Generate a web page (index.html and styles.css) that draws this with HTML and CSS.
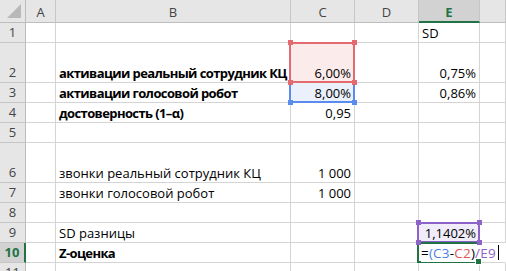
FILE: index.html
```html
<!DOCTYPE html>
<html lang="ru">
<head>
  <meta charset="UTF-8">
  <meta name="viewport" content="width=device-width, initial-scale=1.0">
  <title>Z-оценка</title>
  <link rel="stylesheet" href="styles.css">
</head>
<body>
  <div class="sheet">
    <!-- column headers -->
    <div class="row head-row">
      <div class="corner">
        <svg width="14" height="14" viewBox="0 0 14 14"><polygon points="0,14 14,14 14,0" fill="#b8b8b8"/></svg>
      </div>
      <div class="col-head">A</div>
      <div class="col-head">B</div>
      <div class="col-head">C</div>
      <div class="col-head">D</div>
      <div class="col-head active">E</div>
      <div class="col-head"></div>
    </div>

    <div class="row">
      <div class="row-head">1</div>
      <div class="cell"></div>
      <div class="cell"></div>
      <div class="cell"></div>
      <div class="cell"></div>
      <div class="cell">SD</div>
      <div class="cell"></div>
    </div>

    <div class="row tall">
      <div class="row-head">2</div>
      <div class="cell"></div>
      <div class="cell b">активации реальный сотрудник КЦ</div>
      <div class="cell num sel-red">
        6,00%
        <span class="handle tl"></span><span class="handle tr"></span>
        <span class="handle bl"></span><span class="handle br"></span>
      </div>
      <div class="cell"></div>
      <div class="cell num">0,75%</div>
      <div class="cell"></div>
    </div>

    <div class="row">
      <div class="row-head">3</div>
      <div class="cell"></div>
      <div class="cell b">активации голосовой робот</div>
      <div class="cell num sel-blue">
        8,00%
        <span class="handle bl"></span><span class="handle br"></span>
      </div>
      <div class="cell"></div>
      <div class="cell num">0,86%</div>
      <div class="cell"></div>
    </div>

    <div class="row">
      <div class="row-head">4</div>
      <div class="cell"></div>
      <div class="cell b">достоверность (1–α)</div>
      <div class="cell num">0,95</div>
      <div class="cell"></div>
      <div class="cell"></div>
      <div class="cell"></div>
    </div>

    <div class="row">
      <div class="row-head">5</div>
      <div class="cell"></div>
      <div class="cell"></div>
      <div class="cell"></div>
      <div class="cell"></div>
      <div class="cell"></div>
      <div class="cell"></div>
    </div>

    <div class="row tall">
      <div class="row-head">6</div>
      <div class="cell"></div>
      <div class="cell">звонки реальный сотрудник КЦ</div>
      <div class="cell num">1 000</div>
      <div class="cell"></div>
      <div class="cell"></div>
      <div class="cell"></div>
    </div>

    <div class="row">
      <div class="row-head">7</div>
      <div class="cell"></div>
      <div class="cell">звонки голосовой робот</div>
      <div class="cell num">1 000</div>
      <div class="cell"></div>
      <div class="cell"></div>
      <div class="cell"></div>
    </div>

    <div class="row">
      <div class="row-head">8</div>
      <div class="cell"></div>
      <div class="cell"></div>
      <div class="cell"></div>
      <div class="cell"></div>
      <div class="cell"></div>
      <div class="cell"></div>
    </div>

    <div class="row">
      <div class="row-head">9</div>
      <div class="cell"></div>
      <div class="cell">SD разницы</div>
      <div class="cell"></div>
      <div class="cell"></div>
      <div class="cell num sel-purple">
        1,1402%
        <span class="handle tl"></span><span class="handle tr"></span>
        <span class="handle bl"></span><span class="handle br"></span>
      </div>
      <div class="cell"></div>
    </div>

    <div class="row">
      <div class="row-head active">10</div>
      <div class="cell"></div>
      <div class="cell b">Z-оценка</div>
      <div class="cell"></div>
      <div class="cell"></div>
      <div class="cell editing">
        <span class="formula"><span>=</span><span class="ref-blue">(C3</span><span>-</span><span class="ref-red">C2</span><span>)</span><span class="ref-purple">/E9</span><span class="caret"></span></span>
        <span class="fill-handle"></span>
      </div>
      <div class="cell f-col"></div>
    </div>

    <div class="row last">
      <div class="row-head">11</div>
      <div class="cell"></div>
      <div class="cell"></div>
      <div class="cell"></div>
      <div class="cell"></div>
      <div class="cell"></div>
      <div class="cell"></div>
    </div>
  </div>
</body>
</html>
```

FILE: styles.css
```css
/* Sheet grid */
body {
  margin: 0;
  background: #ffffff;
  font-family: 'Open Sans', 'Liberation Sans', sans-serif;
  font-size: 13px;
  color: #000;
  overflow: hidden;
}

.sheet {
  width: 506px;
}

.row {
  display: grid;
  grid-template-columns: 26px 30px 235px 64px 64px 61px 1fr;
  height: 20px;
}

.row.tall {
  height: 40px;
}

.row.head-row {
  height: 23px;
}

.row.last {
  height: 20px;
}

.row > div {
  box-sizing: border-box;
  border-right: 1px solid #d4d4d4;
  border-bottom: 1px solid #d4d4d4;
  display: flex;
  align-items: flex-end;
  padding: 0 3px 0 3px;
  white-space: nowrap;
  position: relative;
}

/* Headers */
.corner,
.col-head,
.row-head {
  background: #e6e6e6;
  color: #444;
}

.row > .corner {
  border-color: #bdbdbd;
  justify-content: flex-end;
  padding: 0 4px 4px 0;
}

.row > .col-head {
  justify-content: center;
  align-items: center;
  padding: 2px 0 0 0;
  border-right-color: #c6c6c6;
  border-bottom-color: #bdbdbd;
}

.row > .row-head {
  justify-content: center;
  padding: 0 0 1px 0;
  border-right-color: #bdbdbd;
  border-bottom-color: #c6c6c6;
}

.row > .col-head.active {
  background: #d2d2d2;
  color: #217346;
  font-weight: bold;
  border-bottom: 2px solid #217346;
}

.row > .row-head.active {
  background: #d2d2d2;
  color: #217346;
  font-weight: bold;
  border-right: 2px solid #217346;
}

/* Cell formats */
.b {
  font-weight: bold;
  letter-spacing: -0.6px;
}

.row > .num {
  justify-content: flex-end;
}

/* Formula reference highlights */
.sel-red,
.sel-blue,
.sel-purple {
  --ref: #e46a6f;
}

.row > .sel-red {
  background: #fcebeb;
}

.row > .sel-red::after {
  content: "";
  position: absolute;
  top: -1px;
  left: -2px;
  right: -1px;
  bottom: -1px;
  border: 2px solid #e46a6f;
}

.row > .sel-blue {
  --ref: #5b8ced;
  background: #ebf1fc;
}

.row > .sel-blue::after {
  content: "";
  position: absolute;
  top: 0;
  left: -2px;
  right: -1px;
  bottom: -1px;
  border: 2px solid #5b8ced;
  border-top: none;
}

.row > .sel-purple {
  --ref: #8e63c9;
  background: #f1ecf9;
}

.row > .sel-purple::after {
  content: "";
  position: absolute;
  top: -1px;
  left: -2px;
  right: -1px;
  bottom: -1px;
  border: 2px solid #8e63c9;
}

.handle {
  position: absolute;
  width: 5px;
  height: 5px;
  background: var(--ref);
  z-index: 2;
}

.handle.tl { top: -3px; left: -3px; }
.handle.tr { top: -3px; right: -3px; }
.handle.bl { bottom: -3px; left: -3px; }
.handle.br { bottom: -3px; right: -3px; }

/* Cell being edited: the formula spills over into column F */
.row > .editing {
  padding-left: 2px;
  z-index: 1;
}

.row > .editing::after {
  content: "";
  position: absolute;
  top: -1px;
  left: -2px;
  right: -1px;
  bottom: -1px;
  border: 2px solid #217346;
  border-right: none;
}

.row > .f-col {
  border-right-color: transparent;
}

.formula {
  position: relative;
  z-index: 1;
  display: flex;
  align-items: flex-end;
  background: #fff;
  font-size: 13.5px;
  letter-spacing: 0.2px;
}

.ref-blue { color: #4a7fe6; }
.ref-red { color: #e0545a; }
.ref-purple { color: #8e63c9; }

.caret {
  display: inline-block;
  width: 1px;
  height: 15px;
  background: #000;
  margin-left: 2px;
  margin-bottom: 2px;
}

.fill-handle {
  position: absolute;
  right: -3px;
  bottom: -3px;
  width: 5px;
  height: 5px;
  background: #217346;
  border: 1px solid #fff;
  z-index: 2;
}
```
